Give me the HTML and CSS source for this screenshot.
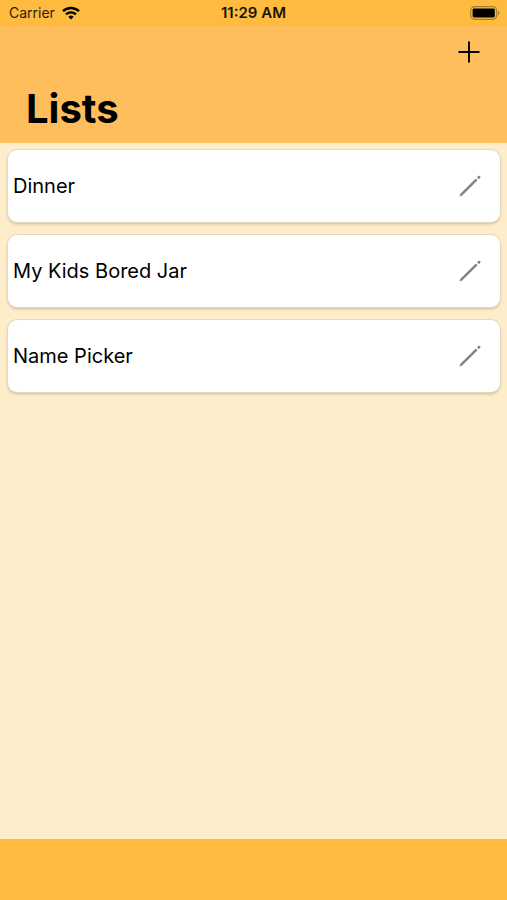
FILE: index.html
```html
<!DOCTYPE html>
<html lang="en">
<head>
  <meta charset="utf-8">
  <meta name="viewport" content="width=device-width, initial-scale=1">
  <title>Lists</title>
  <link rel="stylesheet" href="styles.css">
</head>
<body>
  <div class="status-bar">
    <div class="status-carrier">
      <span>Carrier</span>
      <svg class="wifi-icon" viewBox="0 0 18 14" aria-hidden="true">
        <path d="M1 5.2a11.4 11.4 0 0 1 16 0" fill="none" stroke="currentColor" stroke-width="2.5"/>
        <path d="M4 8.4a7.2 7.2 0 0 1 10 0" fill="none" stroke="currentColor" stroke-width="2.3"/>
        <path d="M6.3 10.8a4 4 0 0 1 5.4 0L9 13.6z" fill="currentColor"/>
      </svg>
    </div>
    <time class="status-time">11:29 AM</time>
    <svg class="battery-icon" viewBox="0 0 30 14" aria-hidden="true">
      <rect x="0.7" y="0.7" width="26" height="12.6" rx="4" fill="none" stroke="#a87b28" stroke-width="1.2"/>
      <rect x="2.6" y="2.6" width="22.2" height="8.8" rx="1.4" fill="#000"/>
      <path d="M28 4.8a2.4 2.4 0 0 1 0 4.4z" fill="#a87b28"/>
    </svg>
  </div>
  <header class="nav-header">
    <button class="add-button" type="button" aria-label="Add list">
      <svg class="plus-icon" viewBox="0 0 22 22" aria-hidden="true">
        <path d="M11 .5v21M.5 11h21" fill="none" stroke="currentColor" stroke-width="1.9"/>
      </svg>
    </button>
    <h1 class="page-title">Lists</h1>
  </header>
  <main class="content">
    <ul class="lists">
      <li class="list-card">
        <span>Dinner</span>
        <button class="edit-button" type="button" aria-label="Edit Dinner">
          <svg class="pencil-icon" viewBox="0 0 24 24" aria-hidden="true">
            <path d="M1.4 22.6l1-2.9L17.8 4.4l1.8 1.8L4.2 21.5z"/>
            <path d="M19 3.2l1.2-1.1q1-.8 1.9 0t0 1.9L21 5.2z"/>
          </svg>
        </button>
      </li>
      <li class="list-card">
        <span>My Kids Bored Jar</span>
        <button class="edit-button" type="button" aria-label="Edit My Kids Bored Jar">
          <svg class="pencil-icon" viewBox="0 0 24 24" aria-hidden="true">
            <path d="M1.4 22.6l1-2.9L17.8 4.4l1.8 1.8L4.2 21.5z"/>
            <path d="M19 3.2l1.2-1.1q1-.8 1.9 0t0 1.9L21 5.2z"/>
          </svg>
        </button>
      </li>
      <li class="list-card">
        <span>Name Picker</span>
        <button class="edit-button" type="button" aria-label="Edit Name Picker">
          <svg class="pencil-icon" viewBox="0 0 24 24" aria-hidden="true">
            <path d="M1.4 22.6l1-2.9L17.8 4.4l1.8 1.8L4.2 21.5z"/>
            <path d="M19 3.2l1.2-1.1q1-.8 1.9 0t0 1.9L21 5.2z"/>
          </svg>
        </button>
      </li>
    </ul>
  </main>
  <footer class="bottom-bar"></footer>
</body>
</html>
```

FILE: styles.css
```css
* {
  box-sizing: border-box;
}

body {
  display: flex;
  flex-direction: column;
  min-height: 100vh;
  margin: 0;
  background: #feedca;
  color: #000;
  font-family: Inter, "Liberation Sans", sans-serif;
}

button {
  display: flex;
  align-items: center;
  justify-content: center;
  padding: 0;
  border: 0;
  background: none;
  color: inherit;
  cursor: pointer;
}

.status-bar {
  display: grid;
  grid-template-columns: 1fr auto 1fr;
  align-items: center;
  height: 26px;
  padding: 0 7px;
  background: #ffbb3f;
  font-size: 14px;
  line-height: 18px;
}

.status-carrier {
  display: flex;
  align-items: center;
  gap: 7px;
  padding-left: 2px;
  color: #2b2009;
}

.wifi-icon {
  width: 18px;
  height: 14px;
  color: #000;
}

.status-time {
  color: #1a1306;
  font-size: 15px;
  font-weight: 600;
}

.battery-icon {
  justify-self: end;
  width: 30px;
  height: 14px;
}

.nav-header {
  display: flex;
  flex-direction: column;
  padding: 4px 16px 8px 26px;
  background: #ffbe5c;
}

.add-button {
  align-self: flex-end;
  width: 44px;
  height: 44px;
}

.plus-icon {
  width: 22px;
  height: 22px;
}

.page-title {
  margin: 9px 0 0;
  font-size: 40px;
  font-weight: 700;
  line-height: 52px;
}

.content {
  flex: 1;
  padding: 7px 7px 7px 8px;
}

.lists {
  display: flex;
  flex-direction: column;
  gap: 13px;
  margin: 0;
  padding: 0;
  list-style: none;
}

.list-card {
  display: flex;
  align-items: center;
  justify-content: space-between;
  height: 72px;
  padding: 0 8px 0 5px;
  border-radius: 9px;
  background: #fff;
  box-shadow: 0 0 0 1px #e3d8c0, 0 2px 3px rgb(90 70 30 / 30%);
  font-size: 20px;
  line-height: 26px;
}

.edit-button {
  width: 44px;
  height: 44px;
}

.pencil-icon {
  width: 24px;
  height: 24px;
  fill: #858585;
}

.bottom-bar {
  height: 61px;
  background: #ffbb3f;
}
```
